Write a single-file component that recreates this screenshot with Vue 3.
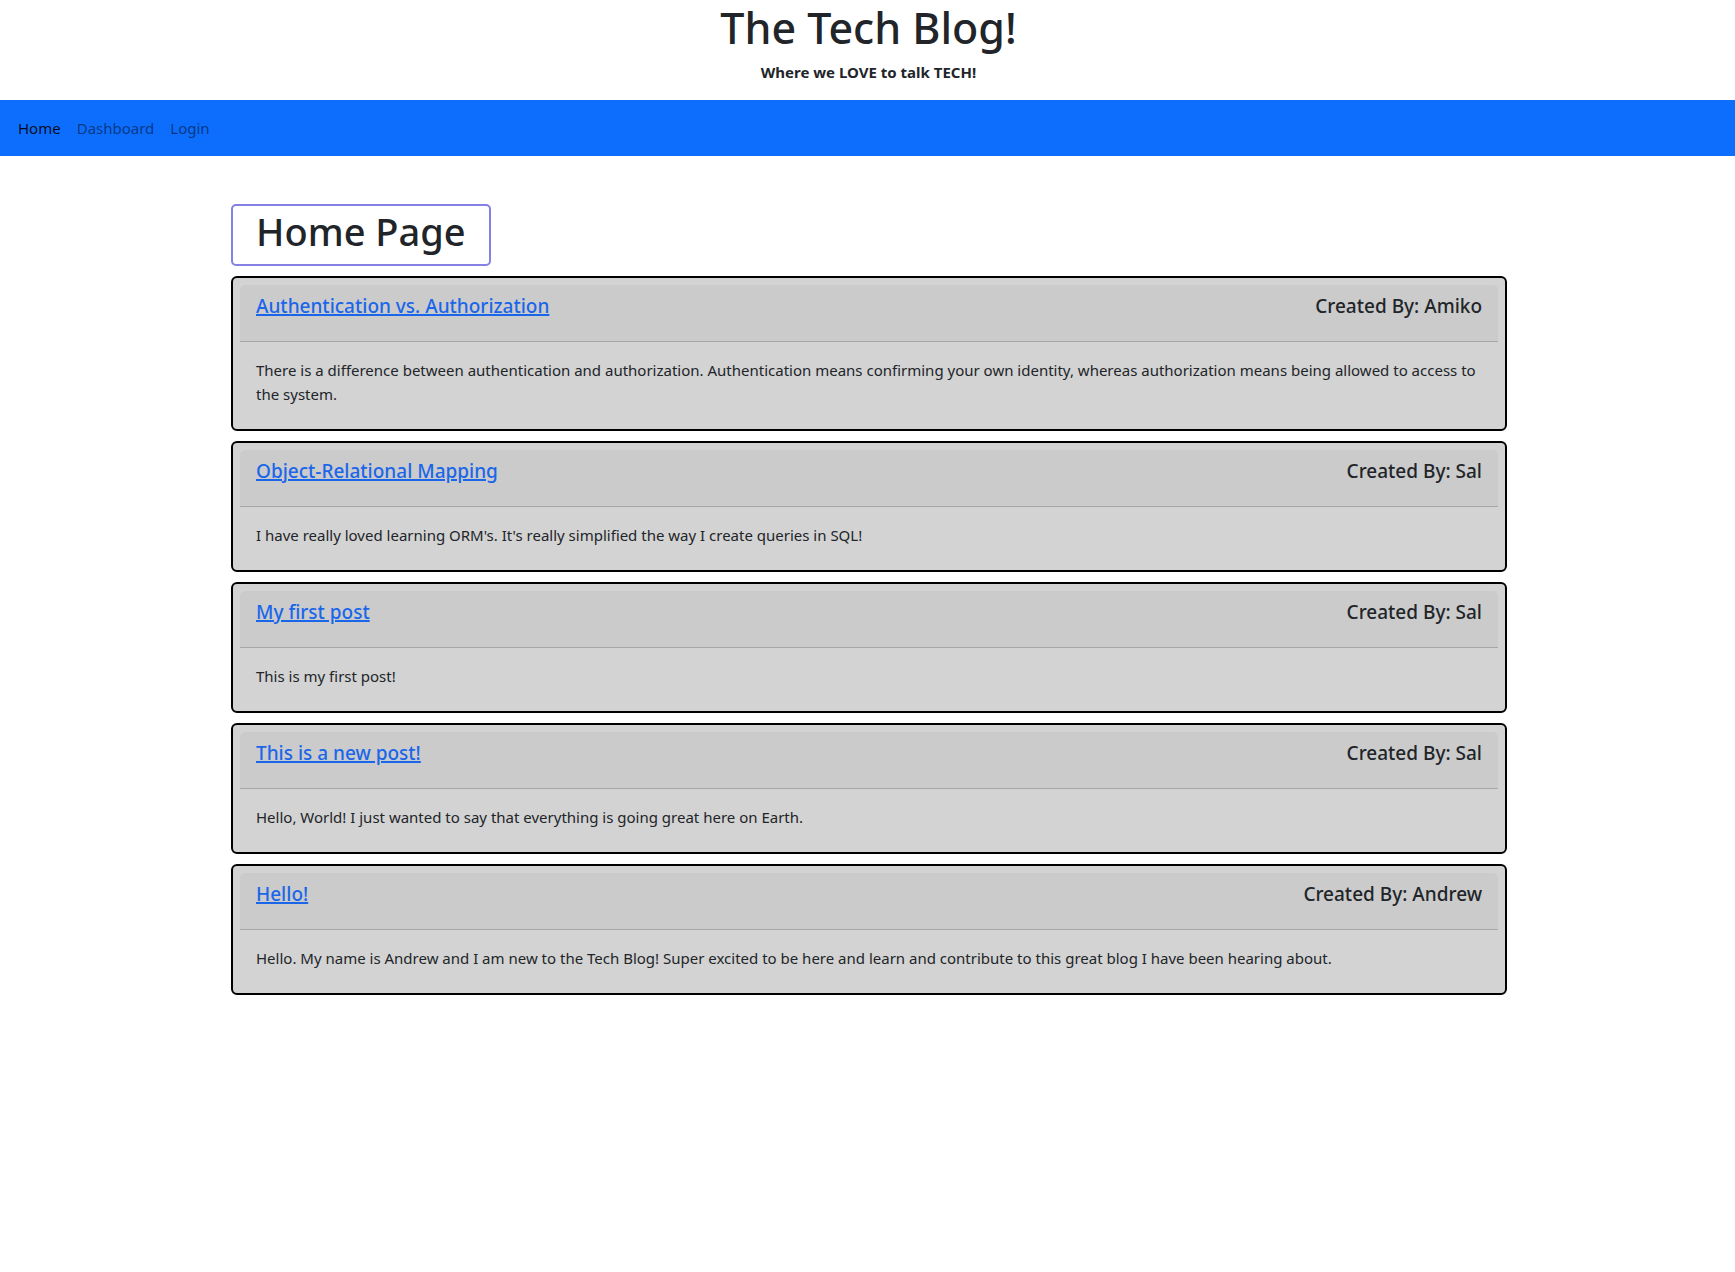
<script setup>
const links = [
  { label: 'Home', active: true },
  { label: 'Dashboard', active: false },
  { label: 'Login', active: false },
]

const posts = [
  {
    title: 'Authentication vs. Authorization',
    author: 'Amiko',
    body: 'There is a difference between authentication and authorization. Authentication means confirming your own identity, whereas authorization means being allowed to access to the system.',
  },
  {
    title: 'Object-Relational Mapping',
    author: 'Sal',
    body: "I have really loved learning ORM's. It's really simplified the way I create queries in SQL!",
  },
  { title: 'My first post', author: 'Sal', body: 'This is my first post!' },
  {
    title: 'This is a new post!',
    author: 'Sal',
    body: 'Hello, World! I just wanted to say that everything is going great here on Earth.',
  },
  {
    title: 'Hello!',
    author: 'Andrew',
    body: 'Hello. My name is Andrew and I am new to the Tech Blog! Super excited to be here and learn and contribute to this great blog I have been hearing about.',
  },
]
</script>

<template>
  <div class="page">
    <header class="masthead">
      <h1 class="site-title">The Tech Blog!</h1>
      <p class="tagline">Where we LOVE to talk TECH!</p>
    </header>

    <nav class="navbar" aria-label="Main">
      <a
        v-for="link in links"
        :key="link.label"
        href="#"
        class="nav-link"
        :class="{ active: link.active }"
      >{{ link.label }}</a>
    </nav>

    <main class="container">
      <h2 class="page-title">Home Page</h2>
      <article v-for="post in posts" :key="post.title" class="card">
        <div class="card-header">
          <h3 class="card-title"><a href="#">{{ post.title }}</a></h3>
          <h3 class="card-title">Created By: {{ post.author }}</h3>
        </div>
        <p class="card-body">{{ post.body }}</p>
      </article>
    </main>
  </div>
</template>

<style>
body {
  margin: 0;
  background: #fff;
}
</style>

<style scoped>
.page {
  font-family: "Segoe UI", "Noto Sans", "Open Sans", sans-serif;
  font-size: 15px;
  line-height: 24px;
  color: #212529;
}

h1,
h2,
h3,
p {
  margin: 0;
}

.masthead {
  display: flex;
  flex-direction: column;
  align-items: center;
  gap: 4px;
  padding: 0 0 16px 2px;
}

.site-title {
  font-size: 43px;
  font-weight: 500;
  line-height: 56px;
}

.tagline {
  font-weight: 700;
}

.navbar {
  display: flex;
  gap: 16px;
  padding: 16px 18px;
  background: #0d6efd;
}

.nav-link {
  color: rgba(0, 0, 0, 0.5);
  text-decoration: none;
}

.nav-link.active {
  color: rgba(0, 0, 0, 0.9);
}

.container {
  display: flex;
  flex-direction: column;
  align-items: stretch;
  gap: 10px;
  box-sizing: border-box;
  max-width: 1327px;
  margin: 0 auto;
  padding: 48px 24px 48px 27px;
}

.page-title {
  align-self: flex-start;
  padding: 1px 23px 9px;
  border: 2px solid #8480e4;
  border-radius: 5px;
  font-size: 38px;
  font-weight: 500;
  line-height: 48px;
}

.card {
  padding: 7px;
  border: 2px solid #000;
  border-radius: 6px;
  background: #d3d3d3;
}

.card-header {
  display: flex;
  justify-content: space-between;
  gap: 16px;
  padding: 9px 16px 23px;
  border-bottom: 1px solid #a7a7a7;
  border-radius: 5px 5px 0 0;
  background: #cbcbcb;
}

.card-title {
  font-size: 19px;
  font-weight: 500;
  line-height: 24px;
}

.card-title a {
  color: #1a66ea;
  text-decoration: underline;
  text-decoration-thickness: 2px;
}

.card-body {
  padding: 16px;
}
</style>
